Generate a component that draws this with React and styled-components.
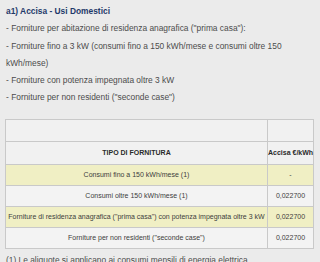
import React from "react";
import styled, { createGlobalStyle } from "styled-components";

const GlobalStyle = createGlobalStyle`
  html, body {
    margin: 0;
    padding: 0;
    background: #ebebeb;
  }
  body {
    font-family: "Liberation Sans", Arial, sans-serif;
    overflow: hidden;
  }
`;

const App = () => {
  return (
    <Page>
      <GlobalStyle />
      <Intro>
        <Heading>a1) Accisa - Usi Domestici</Heading>
        {bullets.map(text => (
          <Bullet key={text}>- {text}</Bullet>
        ))}
      </Intro>
      <Table>
        <colgroup>
          <col style={{ width: "262px" }} />
          <col />
        </colgroup>
        <thead>
          <SpacerRow>
            <SpacerCell />
            <SpacerCell />
          </SpacerRow>
          <tr>
            <HeadCell>TIPO DI FORNITURA</HeadCell>
            <HeadCell>Accisa €/kWh</HeadCell>
          </tr>
        </thead>
        <tbody>
          {rows.map(row => (
            <Row key={row.id} $highlight={row.highlight}>
              <Cell>{row.label}</Cell>
              <Cell>{row.value}</Cell>
            </Row>
          ))}
        </tbody>
      </Table>
      <Footnote>
        (1) Le aliquote si applicano ai consumi mensili di energia elettrica
      </Footnote>
    </Page>
  );
};

export default App;

const bullets = [
  'Forniture per abitazione di residenza anagrafica ("prima casa"):',
  "Forniture fino a 3 kW (consumi fino a 150 kWh/mese e consumi oltre 150 kWh/mese)",
  "Forniture con potenza impegnata oltre 3 kW",
  'Forniture per non residenti ("seconde case")'
];

const rows = [
  { id: 0, label: "Consumi fino a 150 kWh/mese (1)", value: "-", highlight: true },
  { id: 1, label: "Consumi oltre 150 kWh/mese (1)", value: "0,022700" },
  {
    id: 2,
    label:
      'Forniture di residenza anagrafica ("prima casa") con potenza impegnata oltre 3 kW',
    value: "0,022700",
    highlight: true
  },
  { id: 3, label: 'Forniture per non residenti ("seconde case")', value: "0,022700" }
];

const Page = styled.div`
  width: 320px;
  height: 262px;
  padding: 3px 0 0 5px;
  box-sizing: border-box;
  overflow: hidden;
`;

const Intro = styled.div`
  width: 292px;
  padding-left: 1px;
  font-size: 8.4px;
  line-height: 17.3px;
  color: #4c4c4c;
`;

const Heading = styled.div`
  font-weight: bold;
  color: #1f3a6a;
`;

const Bullet = styled.div``;

const Table = styled.table`
  margin-top: 12px;
  width: 309px;
  border-collapse: collapse;
  table-layout: fixed;
  font-size: 7px;
  color: #3d3d3d;
`;

const SpacerRow = styled.tr`
  height: 22px;
`;

const SpacerCell = styled.td`
  border: 1px solid #c9c9c9;
  background: #f1f1f1;
  padding: 0;
`;

const HeadCell = styled.th`
  height: 22px;
  padding: 0;
  border: 1px solid #c9c9c9;
  background: #f1f1f1;
  font-weight: bold;
  color: #2b2b2b;
  text-align: center;
  white-space: nowrap;
`;

const Row = styled.tr`
  height: 21px;
  background: ${props => (props.$highlight ? "#f0efc4" : "#f3f3f3")};
`;

const Cell = styled.td`
  padding: 0;
  border: 1px solid #c9c9c9;
  text-align: center;
  white-space: nowrap;
`;

const Footnote = styled.div`
  margin-top: 6px;
  padding-left: 1px;
  font-size: 8.4px;
  color: #4c4c4c;
`;
